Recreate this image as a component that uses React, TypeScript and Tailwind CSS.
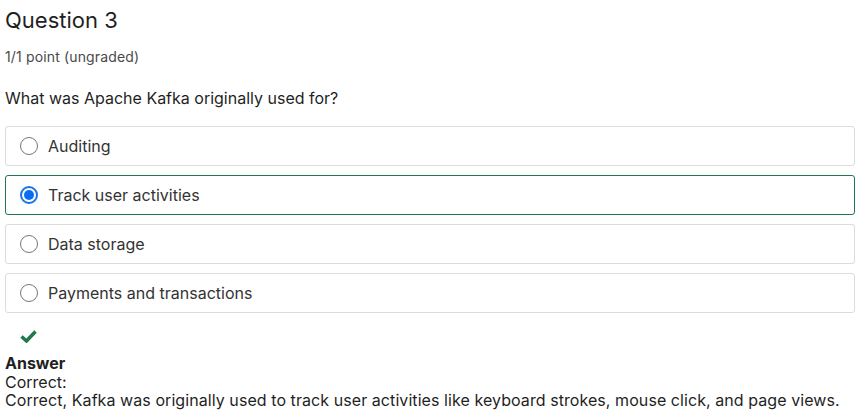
const options = [
  "Auditing",
  "Track user activities",
  "Data storage",
  "Payments and transactions",
];

const selected = 1;

const Radio = ({ checked }: { checked: boolean }) =>
  checked ? (
    <span className="flex h-[18px] w-[18px] items-center justify-center rounded-full border-2 border-[#1a73e8]">
      <span className="h-[10px] w-[10px] rounded-full bg-[#0b6ef0]" />
    </span>
  ) : (
    <span className="h-[18px] w-[18px] rounded-full border border-[#767676] bg-white" />
  );

export default function App() {
  return (
    <div className="min-h-[415px] bg-white px-[5px] pt-[5px] text-[#1f1f1f] font-['Inter',sans-serif]">
      <h2 className="text-[22px] leading-[30px] text-[#1f1f1f]">Question 3</h2>
      <p className="mt-[12px] text-[14px] leading-[20px] tracking-[0.15px] text-[#4a4a4a]">
        1/1 point (ungraded)
      </p>
      <p className="mt-[20px] text-[16px] leading-[22px] text-[#1f1f1f]">
        What was Apache Kafka originally used for?
      </p>

      <div className="mt-[17px] flex w-[850px] flex-col gap-[9px]">
        {options.map((option, i) => (
          <label
            key={option}
            className={`flex h-[40px] items-center gap-[10px] rounded-[3px] border pl-[14px] ${
              i === selected ? "border-[#1e7a4c]" : "border-[#dcdcdc]"
            }`}
          >
            <Radio checked={i === selected} />
            <span className="text-[16px] text-[#333333]">{option}</span>
          </label>
        ))}
      </div>

      <div className="mt-[16px] pl-[15px]">
        <svg width="17" height="14" viewBox="0 0 17 14">
          <path d="M1.5 7.5 L6.5 12 L15.5 2.5" fill="none" stroke="#1e7a4c" strokeWidth="3.5" />
        </svg>
      </div>

      <div className="mt-[11px] text-[16px] leading-[18.5px] text-[#1f1f1f]">
        <p className="font-bold">Answer</p>
        <p>Correct:</p>
        <p className="tracking-[0.07px]">
          Correct, Kafka was originally used to track user activities like keyboard strokes, mouse
          click, and page views.
        </p>
      </div>
    </div>
  );
}
